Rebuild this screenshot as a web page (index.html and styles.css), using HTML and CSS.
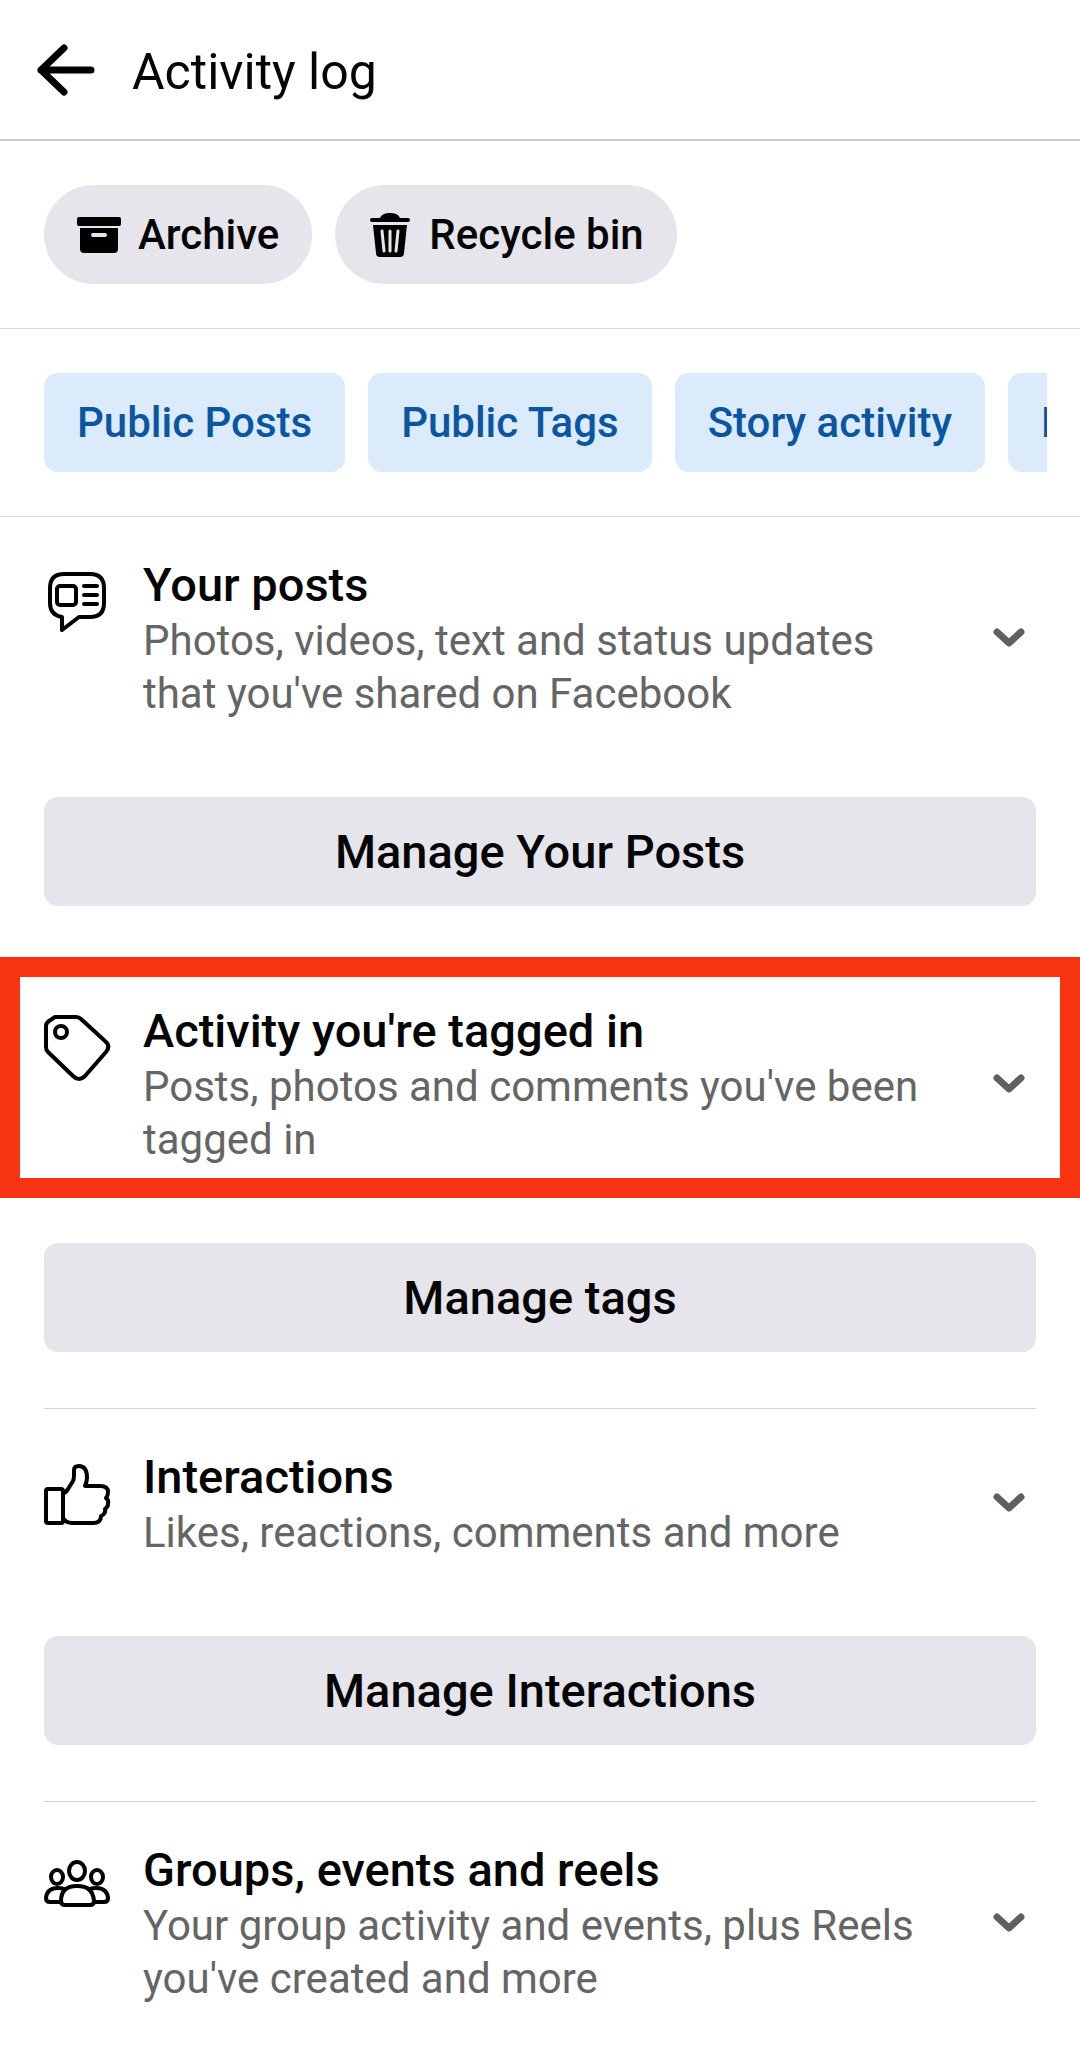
FILE: index.html
```
<!DOCTYPE html>
<html lang="en">
<head>
  <meta charset="UTF-8" />
  <meta name="viewport" content="width=device-width, initial-scale=1.0"/>
  <title>Activity log</title>
  <link rel="stylesheet" href="styles.css">
</head>
<body>

  <header class="topbar">
    <button class="back-btn" aria-label="Back">
      <svg width="60" height="56" viewBox="0 0 60 56" fill="none" stroke="#000" stroke-width="7" stroke-linecap="round" stroke-linejoin="round">
        <path d="M28 6 5 28l23 22M5 28h50"/>
      </svg>
    </button>
    <h1>Activity log</h1>
  </header>

  <main>
    <nav class="pills">
      <button class="pill">
        <svg width="44" height="44" viewBox="0 0 44 44">
          <rect x="0" y="4" width="44" height="9" rx="2"/>
          <path fill-rule="evenodd" d="M3 15h38v21q0 4-4 4H7q-4 0-4-4zM16 20q-2 0-2 2t2 2h12q2 0 2-2t-2-2z"/>
        </svg>
        Archive
      </button>
      <button class="pill">
        <svg width="44" height="44" viewBox="0 0 44 44">
          <path d="M4 5h8q2-5 10-5t10 5h8q2 0 2 2t-2 2H4q-2 0-2-2t2-2z"/>
          <path d="M5 12h34l-3 28q0 4-4 4H12q-4 0-4-4z"/>
          <path d="m14 18 2 20M22 18v20M30 18l-2 20" fill="none" stroke="#e6e5eb" stroke-width="3" stroke-linecap="round"/>
        </svg>
        Recycle bin
      </button>
    </nav>

    <nav class="chips-bar">
      <div class="chips">
        <button class="chip">Public Posts</button>
        <button class="chip">Public Tags</button>
        <button class="chip">Story activity</button>
        <button class="chip">Public comments</button>
      </div>
    </nav>

    <section class="group">
      <button class="group-head" aria-expanded="false">
        <svg class="group-icon" viewBox="0 0 66 66">
          <path d="M20 5h26q14 0 14 14v15q0 14-14 14H35L18 61V48Q6 46 6 34V19Q6 5 20 5z"/>
          <rect x="13" y="17" width="19" height="19" rx="3"/>
          <path d="M40 17h13M40 26h13M40 35h13"/>
        </svg>
        <span class="group-text">
          <span class="group-title">Your posts</span>
          <span class="group-desc">Photos, videos, text and status updates that you've shared on Facebook</span>
        </span>
        <svg class="chevron" viewBox="0 0 32 20"><path d="m4 4 12 11L28 4"/></svg>
      </button>
      <button class="manage-btn">Manage Your Posts</button>
    </section>

    <section class="group highlighted">
      <button class="group-head" aria-expanded="false">
        <svg class="group-icon" viewBox="0 0 66 66">
          <path d="M11 2h21q3 0 5 2l24 22q6 5 1 11L41 61q-6 6-12 0L4 37q-2-2-2-5V11q0-3 3-5t6-4z"/>
          <circle cx="17" cy="17" r="6"/>
        </svg>
        <span class="group-text">
          <span class="group-title">Activity you're tagged in</span>
          <span class="group-desc">Posts, photos and comments you've been tagged in</span>
        </span>
        <svg class="chevron" viewBox="0 0 32 20"><path d="m4 4 12 11L28 4"/></svg>
      </button>
      <button class="manage-btn">Manage tags</button>
    </section>

    <section class="group">
      <button class="group-head" aria-expanded="false">
        <svg class="group-icon" viewBox="0 0 66 66">
          <rect x="2" y="28" width="17" height="34" rx="2"/>
          <path d="M19 32q3 0 5-4l5-8q1-2 1-6V9q0-4 5-4 8 0 8 12 0 3-2 8h15q8 0 8 6 0 4-2 6 3 2 2 6 0 3-3 5 1 5-4 7 0 7-8 7H28q-6 0-9-5"/>
        </svg>
        <span class="group-text">
          <span class="group-title">Interactions</span>
          <span class="group-desc">Likes, reactions, comments and more</span>
        </span>
        <svg class="chevron" viewBox="0 0 32 20"><path d="m4 4 12 11L28 4"/></svg>
      </button>
      <button class="manage-btn">Manage Interactions</button>
    </section>

    <section class="group">
      <button class="group-head" aria-expanded="false">
        <svg class="group-icon" viewBox="0 0 66 66">
          <ellipse cx="33" cy="17" rx="8" ry="9"/>
          <ellipse cx="13" cy="23" rx="6" ry="7"/>
          <ellipse cx="53" cy="23" rx="6" ry="7"/>
          <path d="M17 47q0-15 16-15t17 15q0 4-4 4H21q-4 0-4-4z"/>
          <path d="M20 35q-3-1-6-1Q3 34 2 44q0 4 4 4h11M46 35q3-1 6-1 11 0 12 10 0 4-4 4H50"/>
        </svg>
        <span class="group-text">
          <span class="group-title">Groups, events and reels</span>
          <span class="group-desc">Your group activity and events, plus Reels you've created and more</span>
        </span>
        <svg class="chevron" viewBox="0 0 32 20"><path d="m4 4 12 11L28 4"/></svg>
      </button>
    </section>
  </main>

</body>
</html>
```
FILE: styles.css
```
*,
*::before {
  box-sizing: border-box;
}
body {
  margin: 0;
  background: #fff;
  color: #050505;
  font-family: Roboto, sans-serif;
}
button {
  margin: 0;
  padding: 0;
  border: none;
  background: none;
  color: inherit;
  font: inherit;
  cursor: pointer;
}
svg {
  display: block;
  flex-shrink: 0;
}

.topbar {
  display: flex;
  align-items: center;
  gap: 36px;
  height: 141px;
  padding: 0 36px;
  border-bottom: 2px solid #c9c9c9;
}
.topbar h1 {
  margin: 0;
  padding-top: 4px;
  font-size: 50px;
  font-weight: 400;
}

.pills {
  display: flex;
  gap: 23px;
  padding: 44px;
  border-bottom: 1px solid #dcdcde;
}
.pill {
  display: flex;
  align-items: center;
  gap: 17px;
  height: 99px;
  padding: 0 33px;
  border-radius: 50px;
  background: #e6e5eb;
  font-size: 42px;
  font-weight: 500;
}

.chips-bar {
  padding: 44px 33px 44px 44px;
  border-bottom: 1px solid #dcdcde;
}
.chips {
  display: flex;
  gap: 23px;
  overflow: hidden;
}
.chip {
  flex-shrink: 0;
  height: 99px;
  padding: 0 33px;
  border-radius: 14px;
  background: #dcebfb;
  color: #0a56a0;
  font-size: 42px;
  font-weight: 500;
}

.group {
  position: relative;
  margin: 0 44px;
  padding: 38px 0 56px;
  border-bottom: 1px solid #d2d2d5;
}
.group:last-child {
  padding-bottom: 38px;
  border-bottom: none;
}
.group-head {
  display: flex;
  align-items: center;
  width: 100%;
  text-align: left;
}
.group-icon {
  align-self: flex-start;
  width: 66px;
  height: 66px;
  margin-top: 14px;
  overflow: visible;
  fill: none;
  stroke: #000;
  stroke-width: 4;
  stroke-linecap: round;
  stroke-linejoin: round;
}
.group-text {
  flex: 1;
  padding: 0 44px 0 33px;
}
.group-title {
  display: block;
  font-size: 47px;
  font-weight: 500;
  line-height: 59px;
}
.group-desc {
  display: block;
  color: #656565;
  font-size: 42px;
  line-height: 53px;
}
.chevron {
  width: 32px;
  height: 20px;
  margin-right: 11px;
  fill: none;
  stroke: #606060;
  stroke-width: 7;
  stroke-linecap: round;
  stroke-linejoin: round;
}
.manage-btn {
  width: 100%;
  height: 109px;
  margin-top: 77px;
  border-radius: 14px;
  background: #e6e5eb;
  font-size: 47px;
  font-weight: 500;
}

/* red marker drawn over the section header */
.highlighted::before {
  content: "";
  position: absolute;
  top: -6px;
  left: -44px;
  right: -44px;
  height: 241px;
  border: 20px solid #f73312;
  pointer-events: none;
}
```
